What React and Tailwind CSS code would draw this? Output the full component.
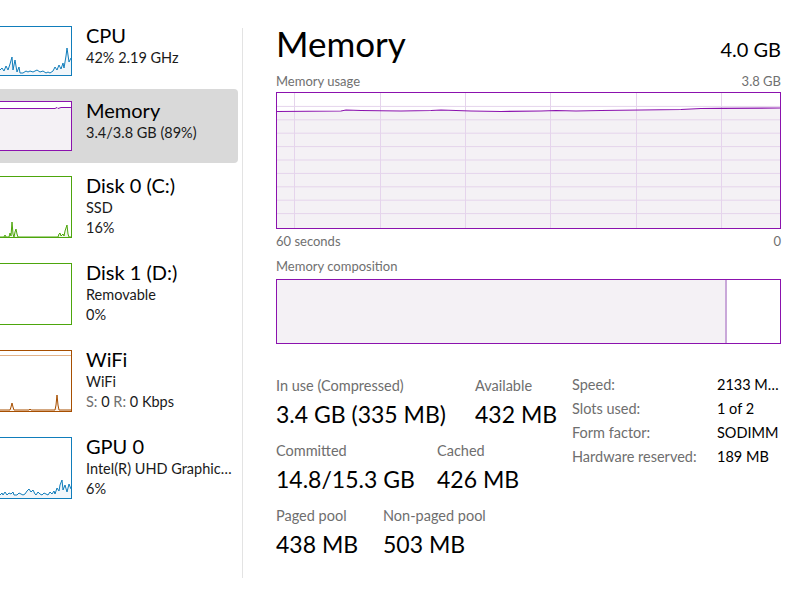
import React from "react";

const toPts = (arr) => arr.map((p) => p.join(",")).join(" ");

function Spark({ w = 72, h, pts, stroke, fill, extra }) {
  const area = [[pts[0][0], h], ...pts, [pts[pts.length - 1][0], h]];
  return (
    <svg width={w} height={h} viewBox={`0 0 ${w} ${h}`} className="block">
      {extra}
      <polygon points={toPts(area)} fill={fill} />
      <polyline points={toPts(pts)} fill="none" stroke={stroke} strokeWidth="1" strokeLinejoin="round" />
    </svg>
  );
}

const cpuPts = [[0,44],[2,42],[4,45],[6,40],[8,44],[10,38],[12,31],[13,44],[15,34],[17,46],[19,41],[20,47],[23,47],[26,45],[28,46],[30,45],[33,46],[35,45],[37,44],[40,46],[43,45],[46,47],[48,46],[50,47],[53,45],[55,41],[57,44],[59,39],[61,43],[63,37],[64,42],[66,30],[67,22],[69,36],[71,32]];
const memPts = [[0,7.5],[55,7.5],[57,6.5],[58,7.5],[61,6.5],[71,6.5]];
const diskPts = [[0,61],[4,61],[5,59],[6,61],[9,61],[10,57],[11,60],[12,46],[13,58],[14,61],[15,56],[16,53],[17,58],[18,61],[40,61],[58,61],[59,58],[60,57],[61,60],[63,58],[64,60],[65,55],[67,49],[68,58],[69,61],[71,61]];
const wifiPts = [[0,60],[10,60],[11,57],[12,53],[13,57],[14,60],[29,60],[30,59],[31,60],[55,60],[56,55],[57,45],[58,55],[59,60],[71,60]];
const gpuPts = [[0,58],[2,56],[3,58],[5,55],[7,58],[9,56],[11,57],[13,55],[14,58],[17,58],[19,56],[21,57],[23,58],[25,57],[27,54],[29,52],[31,55],[33,53],[35,57],[36,58],[38,55],[40,57],[42,58],[44,56],[46,57],[48,58],[50,55],[52,57],[54,54],[55,57],[57,51],[59,54],[60,48],[62,43],[63,53],[65,48],[67,55],[69,47],[71,52]];

function Item({ thumb, title, lines, selected, hClass }) {
  return (
    <div className={selected ? "flex items-start py-[12px] bg-[#d9d9d9] rounded-r-[4px]" : "flex items-start py-[12px]"}>
      <div className={hClass}>{thumb}</div>
      <div className="ml-[14px] -mt-[3px] flex flex-col whitespace-nowrap">
        <div className="text-[20px] leading-[25px] text-black">{title}</div>
        {lines.map((l, i) => (
          <div key={i} className="text-[14.5px] leading-[20px] text-[#1a1a1a]">{l}</div>
        ))}
      </div>
    </div>
  );
}

const gridV = [17, 103, 188, 273, 359, 444];
const gridH = [13.4, 26.8, 40.2, 53.6, 67, 80.4, 93.8, 107.2, 120.6];
const usage = [[0,18.5],[64,18],[69,17],[84,17.5],[124,18],[154,17.5],[164,17],[194,18],[224,18.5],[264,18],[279,17.5],[299,18],[324,17.5],[364,17],[404,16.5],[424,15.5],[444,15.3],[503,15]];

function UsageGraph() {
  const area = [[0, 135], ...usage, [503, 135]];
  return (
    <svg viewBox="0 0 503 135" width="503" height="135" className="block">
      <polygon points={toPts(area)} fill="#f4f1f5" />
      {gridH.map((y) => (
        <line key={"h" + y} x1="0" x2="503" y1={y} y2={y} stroke="#e5d4ec" strokeWidth="1" />
      ))}
      {gridV.map((x) => (
        <line key={"v" + x} x1={x + 0.5} x2={x + 0.5} y1="0" y2="135" stroke="#e5d4ec" strokeWidth="1" />
      ))}
      <polyline points={toPts(usage)} fill="none" stroke="#8b12ae" strokeWidth="1.2" />
    </svg>
  );
}

function Stat({ label, value, wClass }) {
  return (
    <div className={wClass}>
      <div className="text-[14.5px] leading-[18px] text-[#6e6e6e] whitespace-nowrap">{label}</div>
      <div className="mt-[4px] text-[23px] leading-[30px] text-black whitespace-nowrap">{value}</div>
    </div>
  );
}

export default function App() {
  return (
    <div className="w-[793px] h-[595px] bg-white flex overflow-hidden font-['Segoe_UI',Lato,sans-serif] text-black">
      <div className="w-[238px] shrink-0 pt-[14px] flex flex-col gap-[1px]">
        <Item
          hClass="w-[72px] h-[50px] shrink-0 border-y border-r border-[#117dbb]"
          thumb={<Spark w={71} h={48} pts={cpuPts.map(([x, y]) => [x, y - 1])} stroke="#117dbb" fill="#f1f6fa" />}
          title="CPU"
          lines={["42% 2.19 GHz"]}
        />
        <Item
          selected
          hClass="w-[72px] h-[50px] shrink-0 border-y border-r border-[#8b12ae] bg-white"
          thumb={<Spark w={71} h={48} pts={memPts.map(([x, y]) => [x, y - 1])} stroke="#8b12ae" fill="#f4f1f5" />}
          title="Memory"
          lines={["3.4/3.8 GB (89%)"]}
        />
        <Item
          hClass="w-[72px] h-[62px] shrink-0 border-y border-r border-[#4da60c]"
          thumb={<Spark w={71} h={60} pts={diskPts.map(([x, y]) => [x, y - 1])} stroke="#4da60c" fill="#eff7e9" />}
          title="Disk 0 (C:)"
          lines={["SSD", "16%"]}
        />
        <Item
          hClass="w-[72px] h-[62px] shrink-0 border-y border-r border-[#4da60c]"
          thumb={<div />}
          title="Disk 1 (D:)"
          lines={["Removable", "0%"]}
        />
        <Item
          hClass="w-[72px] h-[62px] shrink-0 border-y border-r border-[#a74f01]"
          thumb={
            <Spark
              w={71}
              h={60}
              pts={wifiPts.map(([x, y]) => [x, y - 1])}
              stroke="#a74f01"
              fill="#fcf3eb"
              extra={<line x1="0" x2="71" y1="4.5" y2="4.5" stroke="#e2b38a" strokeWidth="1" />}
            />
          }
          title="WiFi"
          lines={[
            "WiFi",
            <span key="s">
              <span className="text-[#707070]">S: </span>0 <span className="text-[#707070]">R: </span>0 Kbps
            </span>,
          ]}
        />
        <Item
          hClass="w-[72px] h-[62px] shrink-0 border-y border-r border-[#117dbb]"
          thumb={<Spark w={71} h={60} pts={gpuPts.map(([x, y]) => [x, y - 1])} stroke="#117dbb" fill="#f1f6fa" />}
          title="GPU 0"
          lines={["Intel(R) UHD Graphic…", "6%"]}
        />
      </div>

      <div className="ml-[4px] mt-[28px] w-px h-[550px] bg-[#e3e3e3] shrink-0" />

      <div className="flex-1 pl-[33px] pr-[12px] pt-[22px] flex flex-col">
        <div className="flex justify-between items-baseline">
          <div className="text-[35px] leading-[42px]">Memory</div>
          <div className="text-[20px] leading-[24px]">4.0 GB</div>
        </div>
        <div className="mt-[9px] flex justify-between text-[13px] leading-[16px] text-[#707070]">
          <span>Memory usage</span>
          <span>3.8 GB</span>
        </div>
        <div className="mt-[3px] h-[137px] border border-[#8b12ae] overflow-hidden">
          <UsageGraph />
        </div>
        <div className="mt-[4px] flex justify-between text-[13px] leading-[16px] text-[#707070]">
          <span>60 seconds</span>
          <span>0</span>
        </div>
        <div className="mt-[9px] text-[13px] leading-[16px] text-[#707070]">Memory composition</div>
        <div className="mt-[5px] h-[65px] border border-[#8b12ae] flex">
          <div className="w-[448px] bg-[#f4f1f5]" />
          <div className="w-[2px] bg-[#c9a8d9]" />
          <div className="flex-1 bg-white" />
        </div>

        <div className="mt-[29px] flex items-start">
          <div className="w-[296px] shrink-0 pt-[4px] flex flex-col gap-[13px]">
            <div className="flex">
              <Stat wClass="w-[199px] shrink-0" label="In use (Compressed)" value="3.4 GB (335 MB)" />
              <Stat wClass="" label="Available" value="432 MB" />
            </div>
            <div className="flex">
              <Stat wClass="w-[161px] shrink-0" label="Committed" value="14.8/15.3 GB" />
              <Stat wClass="" label="Cached" value="426 MB" />
            </div>
            <div className="flex">
              <Stat wClass="w-[107px] shrink-0" label="Paged pool" value="438 MB" />
              <Stat wClass="" label="Non-paged pool" value="503 MB" />
            </div>
          </div>
          <div className="flex-1 grid grid-cols-[145px_1fr] content-start text-[14.5px] leading-[24px] whitespace-nowrap">
            <div className="text-[#6e6e6e]">Speed:</div>
            <div className="text-black">2133 M…</div>
            <div className="text-[#6e6e6e]">Slots used:</div>
            <div className="text-black">1 of 2</div>
            <div className="text-[#6e6e6e]">Form factor:</div>
            <div className="text-black">SODIMM</div>
            <div className="text-[#6e6e6e]">Hardware reserved:</div>
            <div className="text-black">189 MB</div>
          </div>
        </div>
      </div>
    </div>
  );
}
